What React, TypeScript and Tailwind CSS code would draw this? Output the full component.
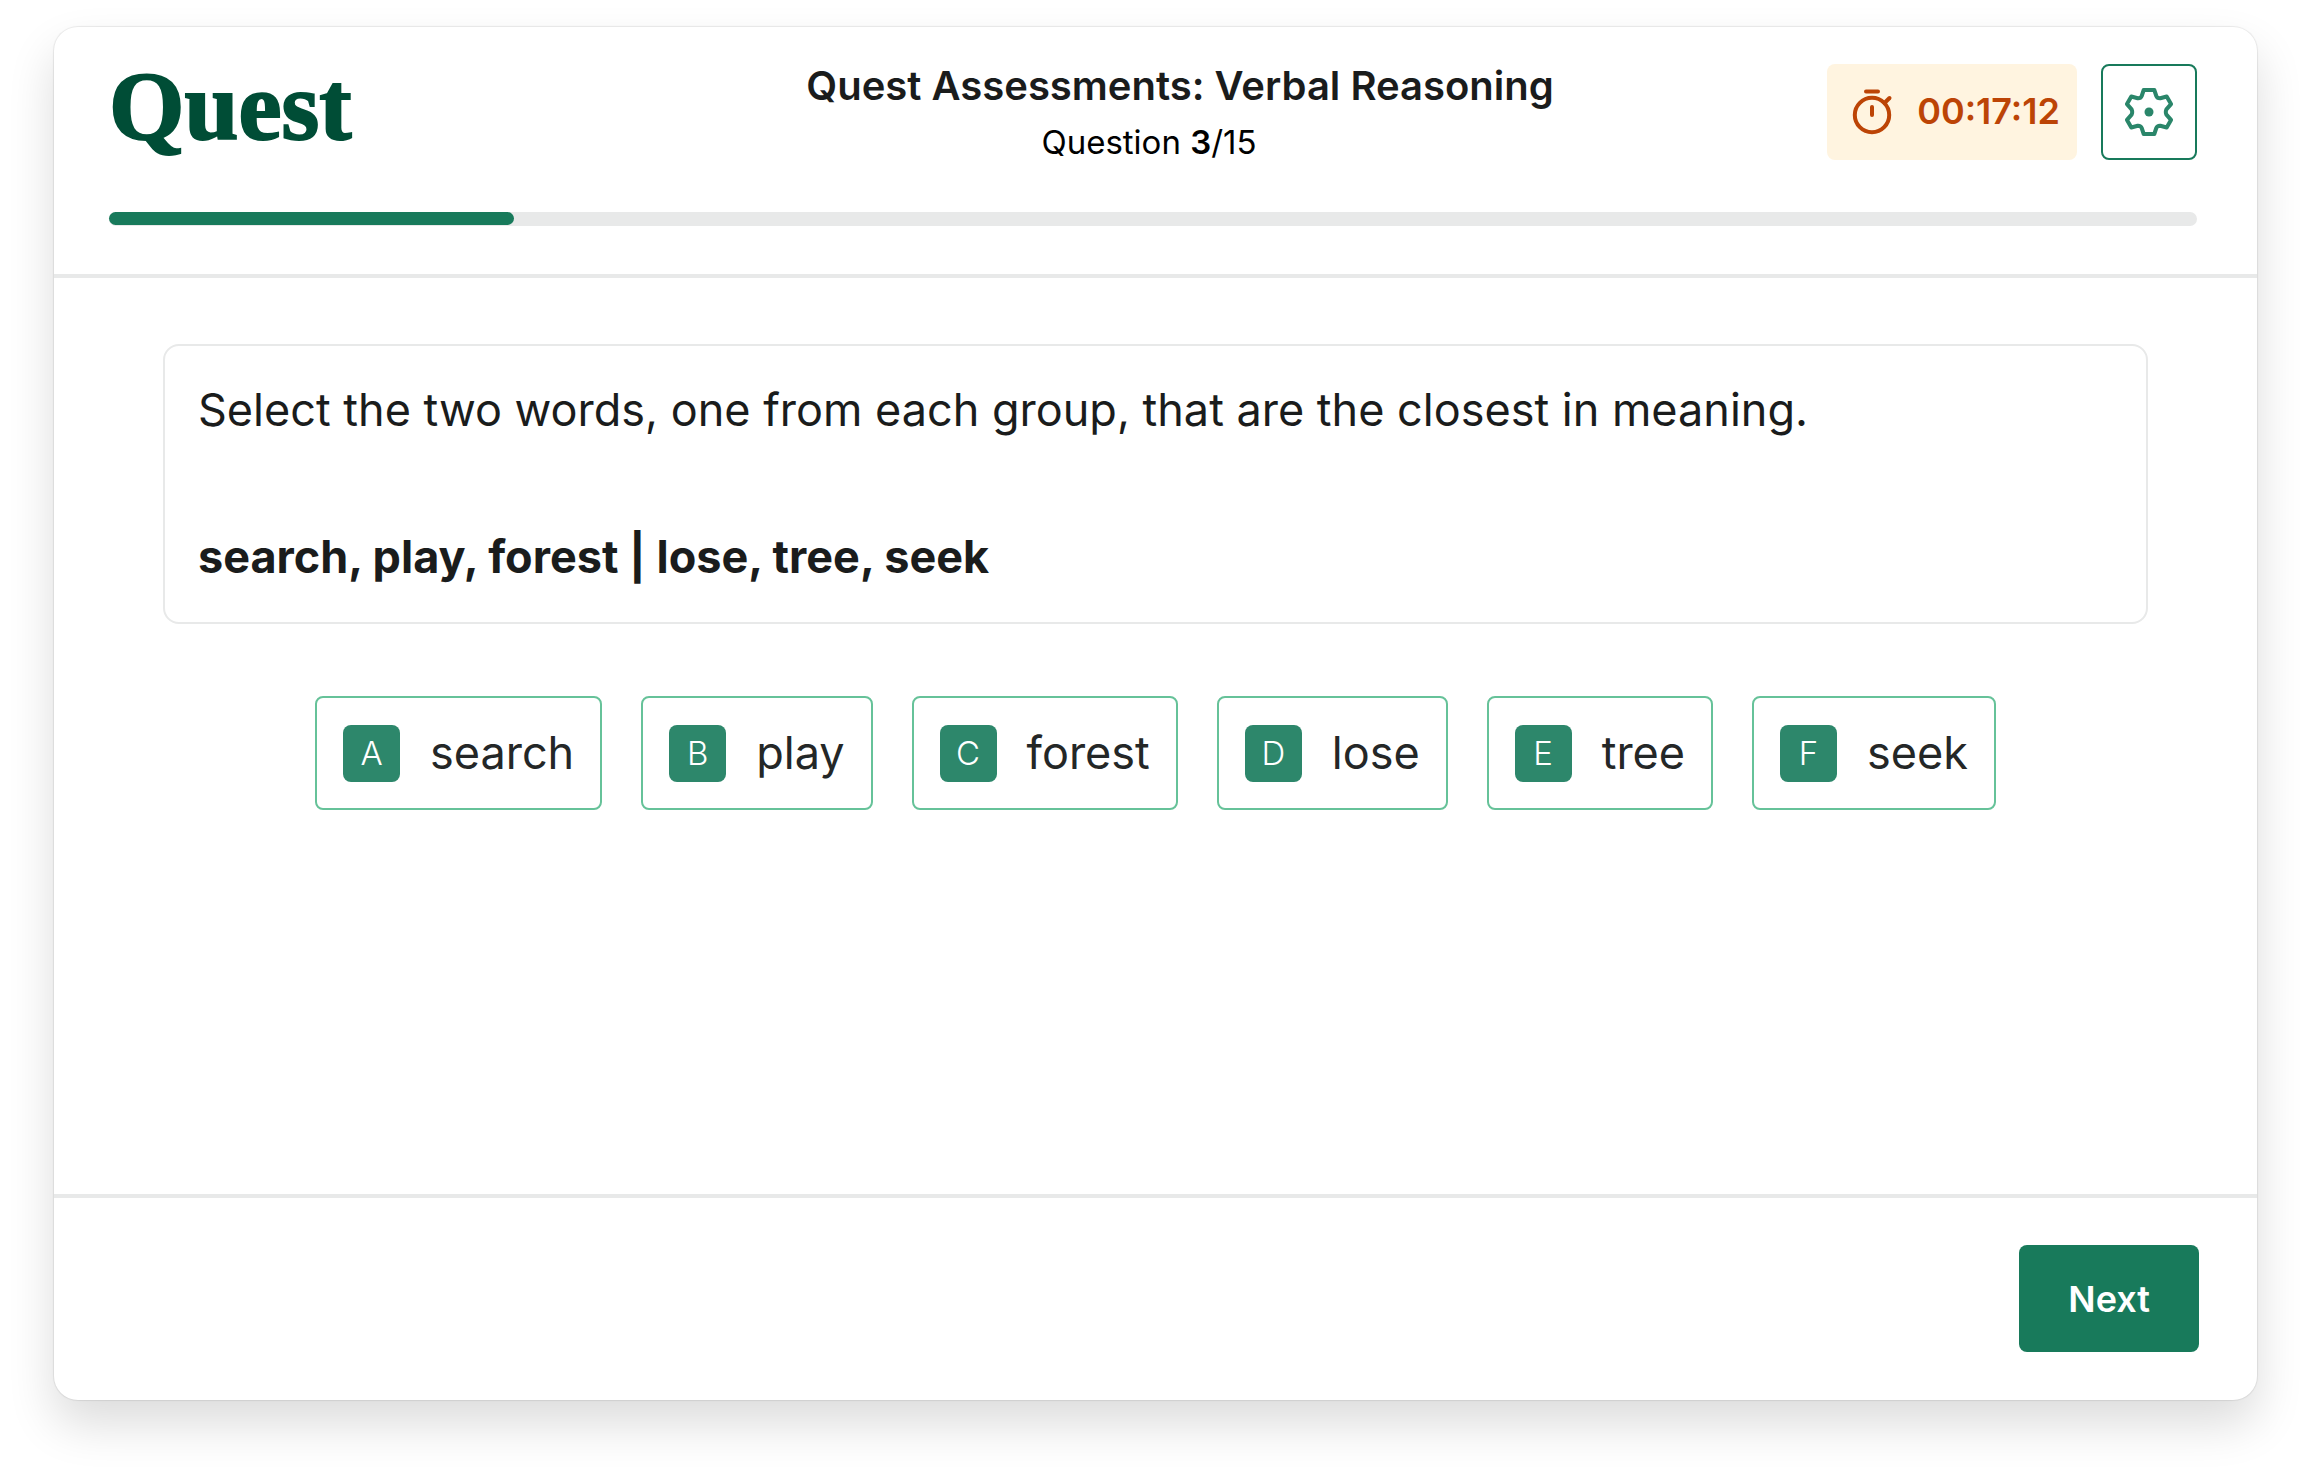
import { useState } from "react";

const options: Array<{ key: string; word: string }> = [
  { key: "A", word: "search" },
  { key: "B", word: "play" },
  { key: "C", word: "forest" },
  { key: "D", word: "lose" },
  { key: "E", word: "tree" },
  { key: "F", word: "seek" },
];

function StopwatchIcon() {
  return (
    <svg
      className="h-12 w-[42px]"
      viewBox="0 0 42 48"
      fill="none"
      stroke="currentColor"
      strokeWidth={4}
      strokeLinecap="round"
      aria-hidden="true"
    >
      <circle cx="21" cy="28" r="17.2" />
      <path d="M15 4.5h12" />
      <path d="M21 20v8" />
      <path d="M33.5 16l5-5" />
    </svg>
  );
}

function GearIcon() {
  return (
    <svg
      className="h-12 w-12"
      viewBox="0 0 48 48"
      fill="none"
      stroke="currentColor"
      strokeWidth={4}
      strokeLinejoin="round"
      aria-hidden="true"
    >
      <path d="M18.7 2h10.6l2 6q1 2.5 4 2.3l6.4-1.8 4.3 7.6-4.6 5.3q-1.2 2.6 0 5.2l4.6 5.3-4.3 7.6-6.4-1.8q-3-.2-4 2.3l-2 6H18.7l-2-6q-1-2.5-4-2.3l-6.4 1.8L2 31.9l4.6-5.3q1.2-2.6 0-5.2L2 16.1l4.3-7.6 6.4 1.8q3 .2 4-2.3z" />
      <circle cx="24" cy="24" r="4.5" fill="currentColor" stroke="none" />
    </svg>
  );
}

export default function App() {
  const [selected, setSelected] = useState<string[]>([]);

  const toggle = (key: string) =>
    setSelected((keys) =>
      keys.includes(key) ? keys.filter((k) => k !== key) : [...keys, key]
    );

  return (
    <div className="flex min-h-screen bg-white px-[54px] pt-[27px] pb-[81px] font-['Inter',sans-serif] text-[#1a1c1c]">
      <div className="flex flex-1 flex-col rounded-3xl bg-white shadow-[0_0_1px_1px_rgba(0,0,0,0.08),0_24px_48px_rgba(0,0,0,0.14)]">
        <header className="border-b-4 border-[#e8e9e9] pt-[37px] pr-[60px] pb-12 pl-[55px]">
          <div className="grid grid-cols-[1fr_auto_1fr] items-start">
            <a
              href="#"
              className="justify-self-start font-['Liberation_Serif',serif] text-[97px] leading-[86px] font-bold text-[#004d36] [-webkit-text-stroke:2px_#004d36]"
            >
              Quest
            </a>
            <div className="text-center">
              <h1 className="pl-[54px] text-[40px] leading-[44px] font-semibold">
                Quest Assessments: Verbal Reasoning
              </h1>
              <p className="pt-[14px] pr-2 text-[33px] leading-10 text-black">
                Question <strong className="font-semibold">3</strong>/15
              </p>
            </div>
            <div className="flex gap-6 justify-self-end">
              <div className="flex h-24 items-center gap-6 rounded-lg bg-[#fff4e0] pr-[17px] pb-0.5 pl-6 text-[#bc4406]">
                <StopwatchIcon />
                <time className="text-[36px] leading-[48px] font-semibold">00:17:12</time>
              </div>
              <button
                type="button"
                aria-label="Settings"
                className="flex h-24 w-24 items-center justify-center rounded-lg border-2 border-[#187a5b] text-[#2a866a]"
              >
                <GearIcon />
              </button>
            </div>
          </div>
          <div
            role="progressbar"
            aria-label="Question progress"
            aria-valuemin={0}
            aria-valuemax={15}
            aria-valuenow={3}
            className="mt-[50px] h-[14px] rounded-full bg-[#e8e9e9]"
          >
            <div className="h-[13px] w-[19.4%] rounded-full bg-[#187a5b]" />
          </div>
        </header>

        <main className="flex-1 px-[109px] pt-[66px]">
          <section className="rounded-2xl border-2 border-[#e8e9e9] px-[33px] pt-[27px] pb-[29px]">
            <p className="text-[45px] leading-[73px]">
              Select the two words, one from each group, that are the closest in meaning.
            </p>
            <p className="pt-[74px] text-[45px] leading-[73px] font-bold">
              search, play, forest | lose, tree, seek
            </p>
          </section>

          <div className="mt-[72px] flex flex-wrap justify-center gap-[39px]">
            {options.map((option) => (
              <button
                key={option.key}
                type="button"
                aria-pressed={selected.includes(option.key)}
                onClick={() => toggle(option.key)}
                className="flex h-[114px] items-center gap-[30px] rounded-lg border-2 border-[#66c299] px-[26px] text-[45px] leading-[56px] text-[#242727] aria-pressed:bg-[#e9f7f0]"
              >
                <span className="flex h-[57px] w-[57px] items-center justify-center rounded-lg bg-[#2d876b] text-[33px] leading-10 font-light text-white">
                  {option.key}
                </span>
                {option.word}
              </button>
            ))}
          </div>
        </main>

        <footer className="flex justify-end border-t-4 border-[#e8e9e9] px-[58px] pt-[47px] pb-12">
          <button
            type="button"
            className="h-[107px] rounded-lg bg-[#187a5b] px-[49px] text-[36px] leading-[48px] font-semibold text-white"
          >
            Next
          </button>
        </footer>
      </div>
    </div>
  );
}
